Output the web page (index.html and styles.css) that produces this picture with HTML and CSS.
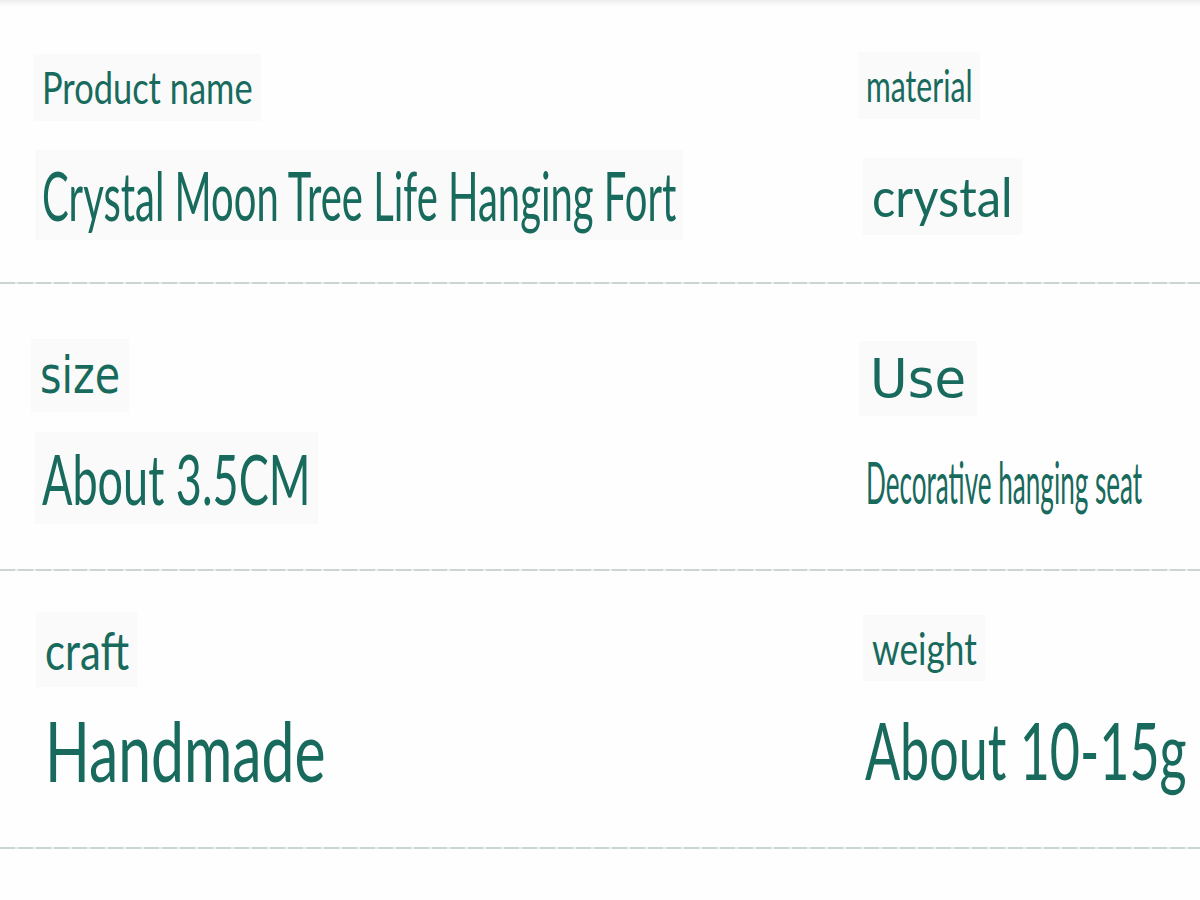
FILE: index.html
```html
<!DOCTYPE html>
<html lang="en">
<head>
<meta charset="utf-8">
<title>Product specifications</title>
<link rel="stylesheet" href="styles.css">
</head>
<body>
<main class="sheet">
  <section class="row row-1">
    <div class="cell">
      <div class="label lab-product"><span class="t t-product">Product name</span></div>
      <div class="value val-crystal-moon"><span class="t t-crystal-moon">Crystal Moon Tree Life Hanging Fort</span></div>
    </div>
    <div class="cell">
      <div class="label lab-material"><span class="t t-material">material</span></div>
      <div class="value val-crystal"><span class="t t-crystal">crystal</span></div>
    </div>
  </section>
  <div class="rule"></div>
  <section class="row row-2">
    <div class="cell">
      <div class="label lab-size"><span class="t t-size">size</span></div>
      <div class="value val-about35"><span class="t t-about35">About 3.5CM</span></div>
    </div>
    <div class="cell">
      <div class="label lab-use"><span class="t t-use">Use</span></div>
      <div class="value val-deco"><span class="t t-deco">Decorative hanging seat</span></div>
    </div>
  </section>
  <div class="rule"></div>
  <section class="row row-3">
    <div class="cell">
      <div class="label lab-craft"><span class="t t-craft">craft</span></div>
      <div class="value val-hand"><span class="t t-hand">Handmade</span></div>
    </div>
    <div class="cell">
      <div class="label lab-weight"><span class="t t-weight">weight</span></div>
      <div class="value val-about1015"><span class="t t-about1015">About 10-15g</span></div>
    </div>
  </section>
  <div class="rule"></div>
</main>
</body>
</html>
```

FILE: styles.css
```css
html, body {
  margin: 0;
  padding: 0;
  background: #fefefe;
}

body {
  width: 1200px;
  height: 900px;
  overflow: hidden;
  font-family: "Lato", "Noto Sans", sans-serif;
  color: #186a5d;
  background: linear-gradient(to bottom, #ececec 0, #f6f6f6 3px, #fefefe 7px) no-repeat;
}

.sheet {
  display: flex;
  flex-direction: column;
  overflow: hidden;
}

.row {
  display: grid;
  grid-template-columns: 824px 336px;
  padding-left: 40px;
}

.row-1 { height: 282px; }
.row-2 { height: 285px; }
.row-3 { height: 276px; }

.cell {
  display: flex;
  flex-direction: column;
  align-items: flex-start;
  min-width: 0;
  overflow: hidden;
  padding: 11px 0 0 11px;
  margin: -11px 0 0 -11px;
}

.label, .value {
  display: flex;
}

.t {
  display: block;
  line-height: 1;
  white-space: nowrap;
  transform-origin: 0 50%;
  background: #f9faf9;
  box-shadow: 0 0 0 11px #f9faf9;
}

.t-size, .t-use {
  font-family: "DejaVu Sans", "Noto Sans", sans-serif;
}

.rule {
  height: 2px;
  background: repeating-linear-gradient(to right, #cbd6d1 0 15px, #e6edea 15px 18px);
}

/* row 1 */
.lab-product { margin-top: 65px; margin-left: 2px; }
.t-product { font-size: 45px; transform: scaleX(0.765); }
.val-crystal-moon { margin-top: 51px; margin-left: 2px; }
.t-crystal-moon { font-size: 68px; transform: scaleX(0.588); }

.lab-material { margin-top: 63px; margin-left: 2px; }
.t-material { font-size: 45px; transform: scaleX(0.67); }
.val-crystal { margin-top: 61px; margin-left: 8px; }
.t-crystal { font-size: 55px; transform: scaleX(0.89); }

/* row 2 */
.lab-size { margin-top: 66px; }
.t-size { font-size: 51px; transform: scaleX(0.81); }
.val-about35 { margin-top: 42px; margin-left: 2px; }
.t-about35 { font-size: 70px; transform: scaleX(0.643); }

.lab-use { margin-top: 68px; margin-left: 6px; }
.t-use { font-size: 53px; transform: scaleX(0.97); }
.val-deco { margin-top: 48px; margin-left: 2px; }
.t-deco { font-size: 58px; transform: scaleX(0.45); background: transparent; box-shadow: none; }

/* row 3 */
.lab-craft { margin-top: 52px; margin-left: 5px; }
.t-craft { font-size: 53px; transform: scaleX(0.79); }
.val-hand { margin-top: 32px; margin-left: 5px; }
.t-hand { font-size: 84px; transform: scaleX(0.70); background: transparent; box-shadow: none; }

.lab-weight { margin-top: 55px; margin-left: 8px; }
.t-weight { font-size: 44px; transform: scaleX(0.80); }
.val-about1015 { margin-top: 39px; margin-left: 1px; }
.t-about1015 { font-size: 80px; transform: scaleX(0.65); background: transparent; box-shadow: none; }
```
